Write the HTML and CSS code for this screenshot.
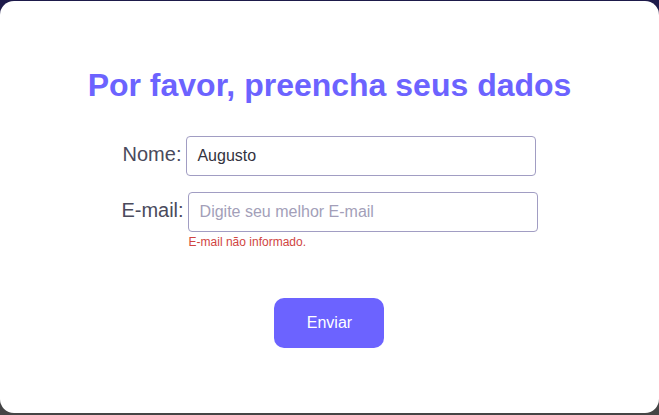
FILE: index.html
```html
<!DOCTYPE html>
<html lang="pt-BR">
<head>
<meta charset="utf-8">
<title>Formulário</title>
<link rel="stylesheet" href="styles.css">
</head>
<body>
  <div class="backdrop">
    <div class="card">
      <h1 class="title">Por favor, preencha seus dados</h1>
      <form class="form">
        <div class="row">
          <label class="label" for="nome">Nome:</label>
          <div class="field">
            <input class="input" id="nome" type="text" value="Augusto">
          </div>
        </div>
        <div class="row row-email">
          <label class="label" for="email">E-mail:</label>
          <div class="field">
            <input class="input input-email" id="email" type="email" placeholder="Digite seu melhor E-mail">
            <span class="error">E-mail não informado.</span>
          </div>
        </div>
        <button class="button" type="button">Enviar</button>
      </form>
    </div>
  </div>
</body>
</html>
```
FILE: styles.css
```css
* { box-sizing: border-box; }
html, body { margin: 0; height: 100%; }
body {
  font-family: "Liberation Sans", Arial, sans-serif;
  background: linear-gradient(to bottom, #1d1a4a 0px, #2a2848 40%, #454545 100%);
}
.backdrop {
  padding-top: 1px;
  height: 415px;
}
.card {
  background: #ffffff;
  height: 412px;
  border-radius: 14px;
  display: flex;
  flex-direction: column;
  align-items: center;
  padding-top: 66px;
}
.title {
  margin: 0;
  font-size: 32px;
  line-height: 36px;
  font-weight: 700;
  color: #6c63ff;
}
.form {
  margin-top: 33px;
  display: flex;
  flex-direction: column;
  align-items: center;
  gap: 16px;
}
.row {
  display: flex;
  align-items: flex-start;
  justify-content: center;
  gap: 5px;
}
.row-email { gap: 4px; }
.label {
  font-size: 20px;
  line-height: 36px;
  color: #4a4a5c;
}
.field {
  display: flex;
  flex-direction: column;
}
.input {
  width: 350px;
  height: 40px;
  border: 1px solid #a19dc3;
  border-radius: 4px;
  padding: 0 10px;
  font-family: "Liberation Sans", Arial, sans-serif;
  font-size: 16px;
  color: #333340;
  background: #fff;
  outline: none;
}
.input-email { padding: 0 11px; }
.input::placeholder { color: #a39fb9; opacity: 1; }
.error {
  margin-top: 3px;
  padding-left: 1px;
  font-size: 12px;
  line-height: 14px;
  color: #d0453f;
}
.button {
  margin-top: 33px;
  width: 110px;
  height: 50px;
  border: none;
  border-radius: 10px;
  background: #6c63ff;
  color: #ffffff;
  font-family: "Liberation Sans", Arial, sans-serif;
  font-size: 16px;
  cursor: pointer;
}
```
